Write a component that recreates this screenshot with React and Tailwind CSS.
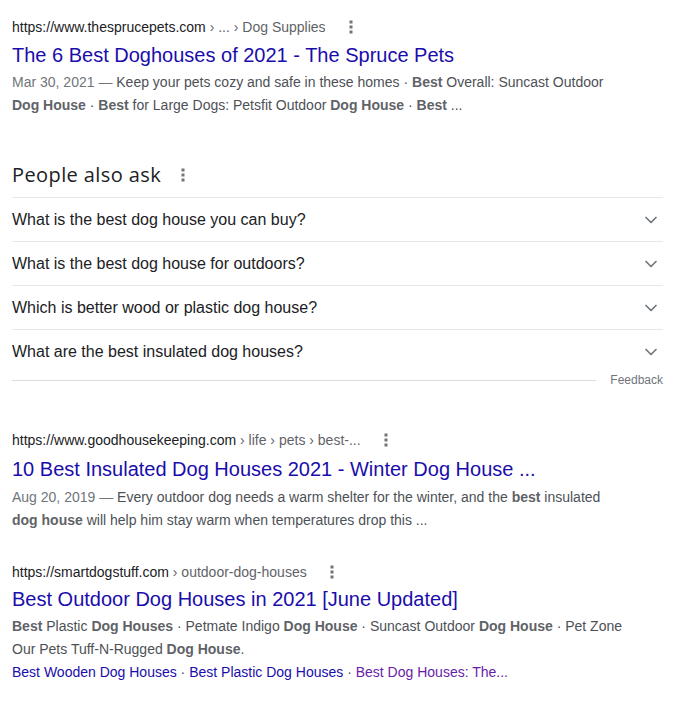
import { ChevronDown } from "lucide-react";

const font = { fontFamily: '"Liberation Sans", Arial, sans-serif' };

function Dots() {
  return (
    <svg width="4" height="16" viewBox="0 0 4 16" className="fill-[#70757a]">
      <rect x="0.5" y="1.5" width="3" height="3" />
      <rect x="0.5" y="6.5" width="3" height="3" />
      <rect x="0.5" y="11.5" width="3" height="3" />
    </svg>
  );
}

function Cite({ host, crumbs }) {
  return (
    <div className="flex items-center h-[22px] text-[14px] leading-[22px]">
      <span className="text-[#202124] whitespace-pre">
        {host}
        <span className="text-[#5f6368]">{crumbs}</span>
      </span>
      <span className="ml-[23px] flex items-center">
        <Dots />
      </span>
    </div>
  );
}

const B = ({ children }) => (
  <b className="font-bold text-[#5f6368]">{children}</b>
);

const questions = [
  "What is the best dog house you can buy?",
  "What is the best dog house for outdoors?",
  "Which is better wood or plastic dog house?",
  "What are the best insulated dog houses?"
];

export default function App() {
  return (
    <div className="bg-white min-h-screen" style={font}>
      <div className="w-[663px] pl-3 pt-4">
        {/* result 1 */}
        <div>
          <Cite host="https://www.thesprucepets.com" crumbs=" › ... › Dog Supplies" />
          <a className="block mt-1 text-[20px] leading-[26px] text-[#1a0dab]">
            The 6 Best Doghouses of 2021 - The Spruce Pets
          </a>
          <div className="mt-[3px] text-[14px] leading-[23px] text-[#4d5156]">
            <span className="text-[#70757a]">Mar 30, 2021 — </span>
            Keep your pets cozy and safe in these homes · <B>Best</B> Overall: Suncast Outdoor
            <br />
            <B>Dog House</B> · <B>Best</B> for Large Dogs: Petsfit Outdoor <B>Dog House</B> · <B>Best</B> ...
          </div>
        </div>

        {/* people also ask */}
        <div className="mt-[46px]">
          <div className="flex items-center pb-[10px]">
            <h2
              className="text-[20px] leading-[24px] tracking-[0.4px] text-[#202124]"
              style={{ fontFamily: '"Open Sans", Arial, sans-serif' }}
            >
              People also ask
            </h2>
            <span className="ml-[20px] flex items-center">
              <Dots />
            </span>
          </div>
          {questions.map((q) => (
            <div
              key={q}
              className="flex items-center justify-between h-[44px] border-t border-[#e8e8e8] text-[16px] text-[#202124]"
            >
              <span>{q}</span>
              <ChevronDown size={20} strokeWidth={2} className="text-[#70757a] mr-[2px]" />
            </div>
          ))}
          <div className="flex items-center h-[14px]">
            <div className="flex-1 h-px bg-[#dadce0]" />
            <span className="pl-[14px] text-[12px] text-[#70757a]">Feedback</span>
          </div>
        </div>

        {/* result 2 */}
        <div className="mt-[42px]">
          <Cite host="https://www.goodhousekeeping.com" crumbs=" › life › pets › best-..." />
          <a className="block mt-[5px] text-[20px] leading-[26px] text-[#1a0dab]">
            10 Best Insulated Dog Houses 2021 - Winter Dog House ...
          </a>
          <div className="mt-[4px] text-[14px] leading-[23px] text-[#4d5156]">
            <span className="text-[#70757a]">Aug 20, 2019 — </span>
            Every outdoor dog needs a warm shelter for the winter, and the <B>best</B> insulated
            <br />
            <B>dog house</B> will help him stay warm when temperatures drop this ...
          </div>
        </div>

        {/* result 3 */}
        <div className="mt-[29px]">
          <Cite host="https://smartdogstuff.com" crumbs=" › outdoor-dog-houses" />
          <a className="block mt-[3px] text-[20px] leading-[26px] text-[#1a0dab]">
            Best Outdoor Dog Houses in 2021 [June Updated]
          </a>
          <div className="mt-[3px] text-[14px] leading-[23px] text-[#4d5156]">
            <B>Best</B> Plastic <B>Dog Houses</B> · Petmate Indigo <B>Dog House</B> · Suncast Outdoor{" "}
            <B>Dog House</B> · Pet Zone
            <br />
            Our Pets Tuff-N-Rugged <B>Dog House</B>.
          </div>
          <div className="text-[14px] leading-[23px] text-[#4d5156]">
            <a className="text-[#1a0dab]">Best Wooden Dog Houses</a> ·{" "}
            <a className="text-[#1a0dab]">Best Plastic Dog Houses</a> ·{" "}
            <a className="text-[#681da8]">Best Dog Houses: The...</a>
          </div>
        </div>
      </div>
    </div>
  );
}
